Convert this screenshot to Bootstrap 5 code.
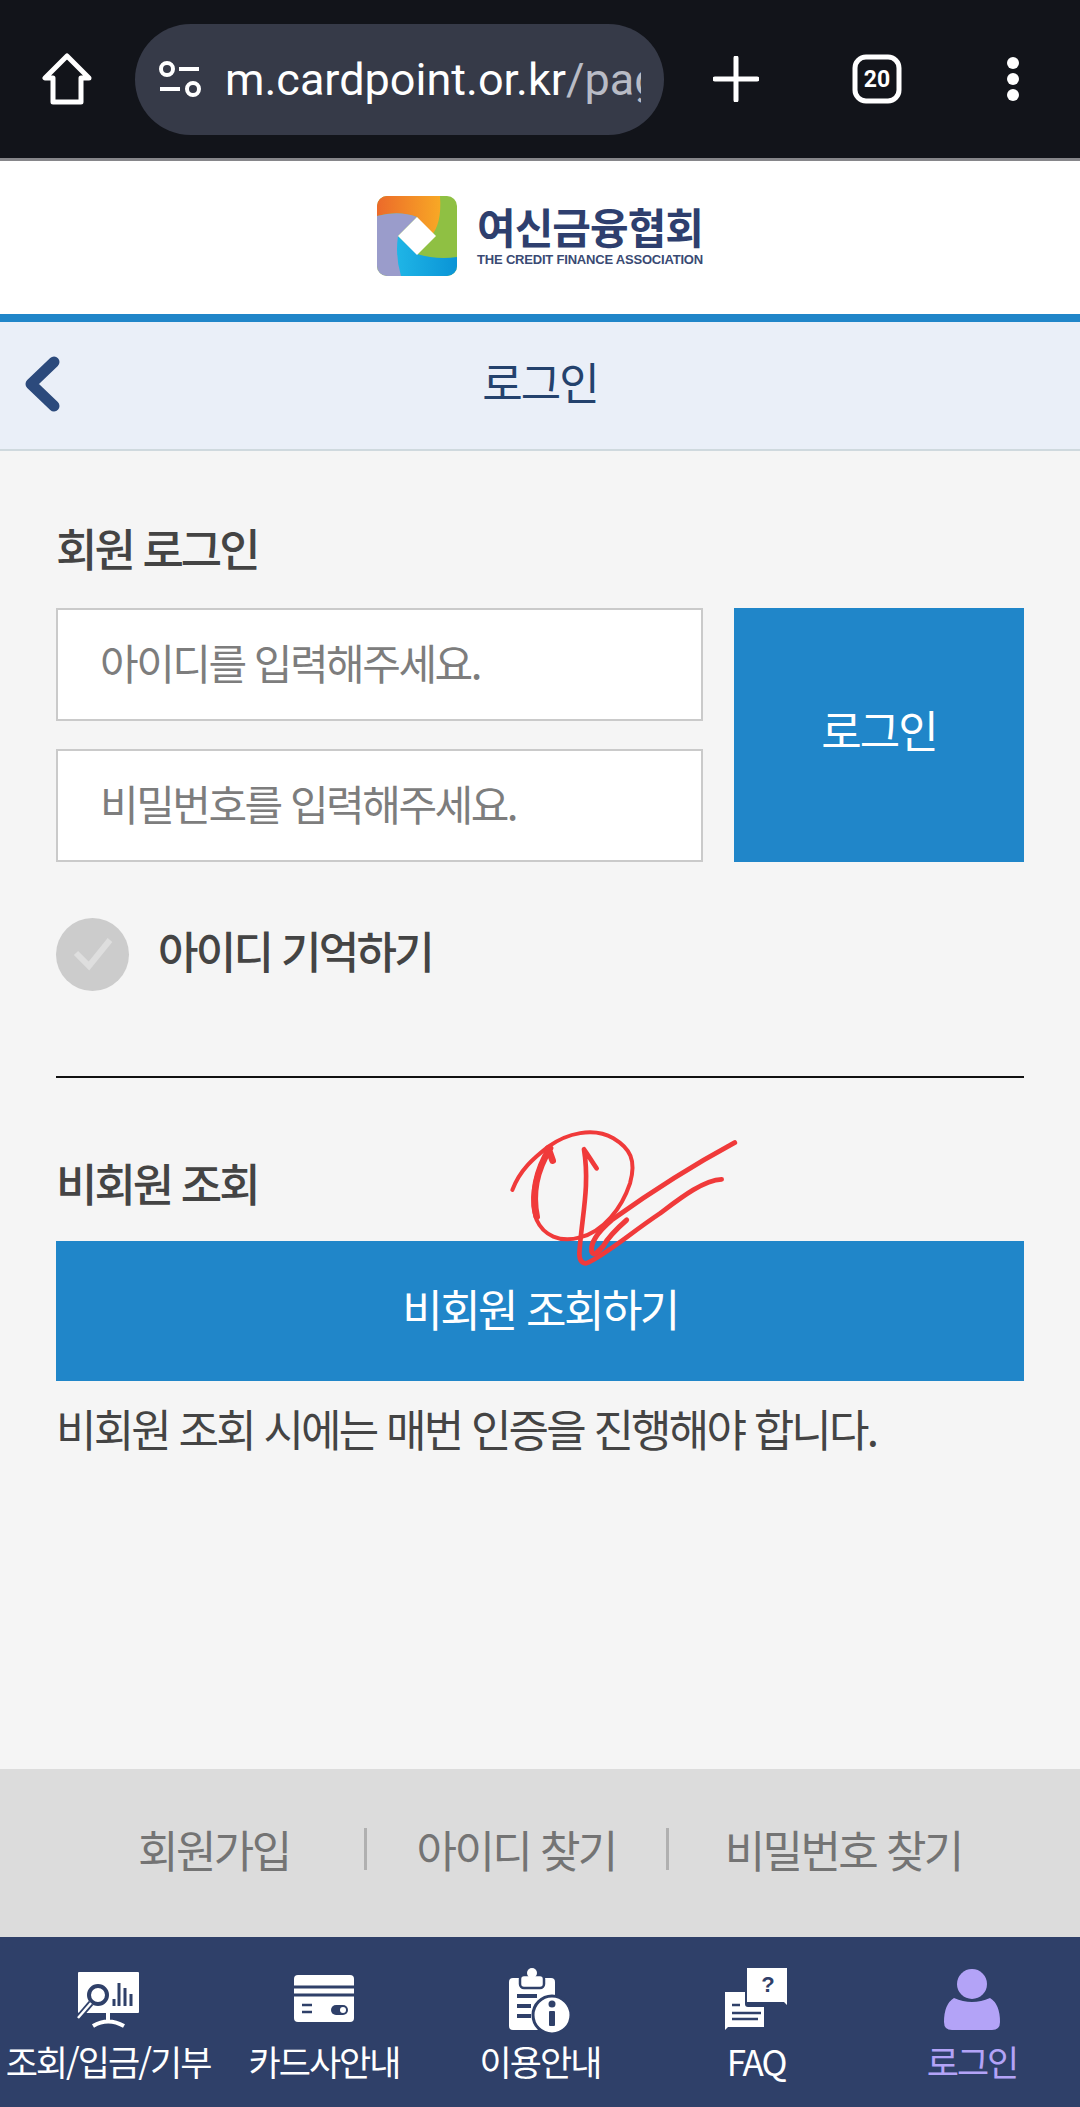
<!DOCTYPE html>
<html lang="ko">
<head>
    <meta charset="UTF-8">
    <meta name="viewport" content="width=device-width, initial-scale=1.0">
    <title>로그인</title>
    <link href="https://cdn.jsdelivr.net/npm/bootstrap@5.3.3/dist/css/bootstrap.min.css" rel="stylesheet">
    <style>
        html, body { height: 100%; }
        body {
            font-family: "Noto Sans CJK KR", "Noto Sans", sans-serif;
            background: #f5f5f5;
            color: #444;
            position: relative;
            letter-spacing: -2px;
        }
        .page-wrap { height: 2107px; }
        .chrome-bar { height: 161px; background: #12141a; border-bottom: 3px solid #86868a; padding: 0 0 0 42px; }
        .chrome-url {
            width: 529px; height: 111px; margin: 0 0 0 43px; background: #363a48; border-radius: 56px;
            padding-left: 24px; color: #fff; font-family: Roboto, sans-serif; font-size: 45px; letter-spacing: 0;
            overflow: hidden; white-space: nowrap;
        }
        .chrome-url-text { width: 416px; margin: 2px 0 0 24px; overflow: hidden; }
        .chrome-url-text span { color: #b9bcc6; }
        .chrome-plus { margin-left: 49px; }
        .chrome-tabs { margin-left: 93px; }
        .chrome-dots { margin-left: 104px; }
        .logo-bar { height: 153px; background: #fff; padding-bottom: 4px; }
        .logo-mark { filter: blur(.6px); }
        .logo-name { font-size: 42px; line-height: 46px; font-weight: 700; color: #2e3f6e; letter-spacing: -1px; }
        .logo-sub { font-family: "Liberation Sans", sans-serif; font-size: 13px; line-height: 16px; margin-top: 3px; font-weight: 700; color: #3a4a73; letter-spacing: -.2px; white-space: nowrap; }
        .title-bar { height: 137px; background: #eaeff8; border-top: 8px solid #2086c9; border-bottom: 2px solid #cfd9de; padding-bottom: 9px; position: relative; }
        .title-bar h1 { font-size: 44px; font-weight: 400; color: #24426d; margin: 0; letter-spacing: -2px; }
        .back-icon { position: absolute; left: 22px; top: 34px; }
        .main-area { padding: 0 56px; }
        .sec-title { font-size: 45px; font-weight: 500; line-height: 60px; margin: 0; color: #444; letter-spacing: -3px; }
        .login-title { margin-top: 67px; }
        .login-row { margin-top: 30px; gap: 31px; }
        .login-inputs { width: 647px; gap: 28px; }
        .login-input.form-control {
            height: 113px; border: 2px solid #cacaca; border-radius: 0; background: #fff;
            font-size: 42px; padding: 0 0 6px 42px; letter-spacing: -2.5px; color: #777;
        }
        .login-input.form-control::placeholder { color: #7d7d7d; opacity: 1; }
        .login-btn.btn {
            flex: 1; background: #2086c9; color: #fff; border: 0; border-radius: 0; padding-bottom: 18px; font-size: 44px; letter-spacing: -2px;
        }
        .remember { margin-top: 55px; gap: 29px; }
        .remember-check { width: 73px; height: 73px; border-radius: 50%; background: #cccccc; }
        .remember-label { font-size: 44px; font-weight: 500; letter-spacing: -2.7px; color: #444; padding-bottom: 8px; }
        .sec-rule { border: 0; border-top: 2px solid #111; opacity: 1; margin: 85px 0 0; }
        .guest-title { margin-top: 75px; }
        .guest-btn.btn {
            width: 100%; height: 140px; margin-top: 28px; background: #2086c9; color: #fff; border: 0; border-radius: 0;
            padding-bottom: 12px; font-size: 44px; letter-spacing: -2.5px;
        }
        .guest-note { font-size: 44px; line-height: 60px; margin: 17px 0 0; color: #444; letter-spacing: -2.8px; white-space: nowrap; }
        .sub-links { height: 168px; background: #dcdcdc; font-size: 44px; color: #747474; padding: 0 0 8px 138px; letter-spacing: -2.6px; }
        .sub-links a { color: inherit; text-decoration: none; white-space: nowrap; }
        .sub-sep { width: 3px; height: 42px; background: #b0b0b0; margin: 0 50px 0 74px; }
        .sub-sep-b { margin: 0 56px 0 50px; }
        .tab-bar { height: 170px; background: #2f4069; }
        .tab-item { color: #fff; text-decoration: none; font-size: 35px; line-height: 50px; letter-spacing: -2px; white-space: nowrap; padding-top: 31px; }
        .tab-item.is-on { color: #b3a3f7; }
        .tab-icon { height: 72px; margin-bottom: -4px; }
        .scribble { position: absolute; left: 480px; top: 1120px; pointer-events: none; }
    </style>
</head>
<body>
    <div class="page-wrap d-flex flex-column">
        <div class="chrome-bar d-flex align-items-center flex-shrink-0">
            <svg width="50" height="54" viewBox="0 0 50 54" fill="none" stroke="#fff" stroke-width="5" stroke-linejoin="round"><path d="M25 4 3 26h8v24h28V26h8z"/></svg>
            <div class="chrome-url d-flex align-items-center">
                <svg width="42" height="36" viewBox="0 0 42 36" fill="none" stroke="#fff" stroke-width="4" class="flex-shrink-0"><circle cx="8" cy="8" r="6"/><path d="M20 8h20M1 28h20"/><circle cx="34" cy="28" r="6"/></svg>
                <div class="chrome-url-text">m.cardpoint.or.kr<span>/page</span></div>
            </div>
            <svg class="chrome-plus" width="46" height="46" viewBox="0 0 46 46" stroke="#fff" stroke-width="5" stroke-linecap="round"><path d="M23 2v42M2 23h42"/></svg>
            <svg class="chrome-tabs" width="50" height="50" viewBox="0 0 50 50"><rect x="3" y="3" width="44" height="44" rx="11" fill="none" stroke="#fff" stroke-width="5"/><text x="25" y="33" text-anchor="middle" fill="#fff" font-family="Roboto, sans-serif" font-size="23" font-weight="700" letter-spacing="0">20</text></svg>
            <svg class="chrome-dots" width="14" height="46" viewBox="0 0 14 46" fill="#fff"><circle cx="7" cy="7" r="6"/><circle cx="7" cy="23" r="6"/><circle cx="7" cy="39" r="6"/></svg>
        </div>

        <div class="logo-bar d-flex align-items-center justify-content-center flex-shrink-0 gap-3">
            <svg class="logo-mark" width="80" height="80" viewBox="0 0 80 80">
                <defs>
                    <clipPath id="logoClip"><rect width="80" height="80" rx="10"/></clipPath>
                    <linearGradient id="logoOrange" x1="0" x2="1"><stop offset="0" stop-color="#ec6a2a"/><stop offset="1" stop-color="#f8a825"/></linearGradient>
                    <linearGradient id="logoBlue" x1="0" x2="1"><stop offset="0" stop-color="#1fb5e6"/><stop offset="1" stop-color="#0a94d6"/></linearGradient>
                </defs>
                <g clip-path="url(#logoClip)">
                    <rect width="80" height="80" fill="#8fc043"/>
                    <path d="M0 0h63q2 28-9 40L40 21Q20 14 0 20z" fill="url(#logoOrange)"/>
                    <path d="M0 20q22-6 40 1L21 40q4 26 19 40H0z" fill="#9a9ccb"/>
                    <path d="M21 40l19 18q20 6 40 3v19H24Q18 60 21 40z" fill="url(#logoBlue)"/>
                    <path d="M40 21 59 40 40 59 21 40z" fill="#fff"/>
                </g>
            </svg>
            <div class="ms-1">
                <div class="logo-name">여신금융협회</div>
                <div class="logo-sub">THE CREDIT FINANCE ASSOCIATION</div>
            </div>
        </div>

        <div class="title-bar d-flex align-items-center justify-content-center flex-shrink-0">
            <svg class="back-icon" width="40" height="56" viewBox="0 0 40 56" fill="none" stroke="#2c4a7c" stroke-width="11" stroke-linecap="round" stroke-linejoin="round"><path d="M32 6 9 28l23 22"/></svg>
            <h1>로그인</h1>
        </div>

        <div class="main-area flex-grow-1">
            <h2 class="sec-title login-title">회원 로그인</h2>
            <div class="login-row d-flex">
                <div class="login-inputs d-flex flex-column">
                    <input class="login-input form-control" type="text" placeholder="아이디를 입력해주세요.">
                    <input class="login-input form-control" type="text" placeholder="비밀번호를 입력해주세요.">
                </div>
                <button class="login-btn btn" type="button">로그인</button>
            </div>
            <div class="remember d-flex align-items-center">
                <div class="remember-check d-flex align-items-center justify-content-center">
                    <svg width="40" height="34" viewBox="0 0 40 34" fill="none" stroke="#dedede" stroke-width="6"><path d="M3 16l13 13L37 3"/></svg>
                </div>
                <span class="remember-label">아이디 기억하기</span>
            </div>
            <hr class="sec-rule">
            <h2 class="sec-title guest-title">비회원 조회</h2>
            <button class="guest-btn btn" type="button">비회원 조회하기</button>
            <p class="guest-note">비회원 조회 시에는 매번 인증을 진행해야 합니다.</p>
        </div>

        <div class="sub-links d-flex align-items-center flex-shrink-0">
            <a href="#">회원가입</a>
            <span class="sub-sep"></span>
            <a href="#">아이디 찾기</a>
            <span class="sub-sep sub-sep-b"></span>
            <a href="#">비밀번호 찾기</a>
        </div>

        <div class="tab-bar row g-0 flex-shrink-0">
            <a class="tab-item col d-flex flex-column align-items-center" href="#">
                <svg class="tab-icon" width="64" height="72" viewBox="0 0 64 72">
                    <rect x="2" y="4" width="61" height="41" rx="1" fill="#fff"/>
                    <circle cx="22" cy="27" r="9" fill="none" stroke="#2f4069" stroke-width="4"/>
                    <path d="M15 35 3 49" stroke="#2f4069" stroke-width="6"/><path d="M15 35 2 50" stroke="#fff" stroke-width="2.5"/>
                    <path d="M38 38v-7M43 38V15M49 38V20M55 38V26" stroke="#2f4069" stroke-width="3"/>
                    <path d="M32 45v9M17 58q15-9 31 0" stroke="#fff" stroke-width="4" fill="none"/>
                </svg>
                조회/입금/기부
            </a>
            <a class="tab-item col d-flex flex-column align-items-center" href="#">
                <svg class="tab-icon" width="60" height="72" viewBox="0 0 60 72">
                    <rect x="0" y="7" width="60" height="47" rx="4" fill="#fff"/>
                    <path d="M0 19h60M0 27h60" stroke="#2f4069" stroke-width="3"/>
                    <path d="M8 37h10M8 44h10" stroke="#2f4069" stroke-width="2.5"/>
                    <rect x="37" y="37" width="17" height="10" rx="5" fill="#2f4069"/><circle cx="49" cy="42" r="3" fill="#fff"/>
                </svg>
                카드사안내
            </a>
            <a class="tab-item col d-flex flex-column align-items-center" href="#">
                <svg class="tab-icon" width="62" height="72" viewBox="0 0 62 72">
                    <path d="M4 10h8v6h24v-6h6q4 0 4 4v44q0 4-4 4H4q-4 0-4-4V14q0-4 4-4z" fill="#fff"/>
                    <rect x="11" y="7" width="24" height="13" rx="4" fill="#fff" stroke="#2f4069" stroke-width="2.500"/><circle cx="23" cy="5" r="5" fill="#fff"/>
                    <path d="M8 28h20M8 38h14M8 48h14" stroke="#2f4069" stroke-width="4"/>
                    <circle cx="43" cy="47" r="19" fill="#fff" stroke="#2f4069" stroke-width="3"/>
                    <rect x="40" y="43" width="6" height="15" rx="1" fill="#2f4069"/><circle cx="43" cy="36" r="3.500" fill="#2f4069"/>
                </svg>
                이용안내
            </a>
            <a class="tab-item col d-flex flex-column align-items-center" href="#">
                <svg class="tab-icon" width="62" height="72" viewBox="0 0 62 72">
                    <path d="M22 0h40v37l-3-3H22z" fill="#fff"/>
                    <path d="M0 24h20v12q0 3 3 3h16v20H3l-3 3z" fill="#fff"/>
                    <path d="M7 37h8M7 45h29M7 51h26" stroke="#2f4069" stroke-width="2.500"/>
                    <text x="42" y="24" text-anchor="middle" font-family="Liberation Sans, sans-serif" font-size="22" font-weight="700" fill="#2f4069">?</text>
                </svg>
                FAQ
            </a>
            <a class="tab-item is-on col d-flex flex-column align-items-center" href="#">
                <svg class="tab-icon" width="56" height="72" viewBox="0 0 56 72" fill="#b3a3f7">
                    <circle cx="28" cy="16" r="15"/>
                    <path d="M10 30q18 8 36 0 10 6 10 24 0 8-8 8H8q-8 0-8-8 0-18 10-24z"/>
                </svg>
                로그인
            </a>
        </div>
    </div>

    <svg class="scribble" width="280" height="170" viewBox="0 0 840 510" fill="none" stroke="#f03a3a" stroke-linecap="round" stroke-linejoin="round">
        <path stroke-width="12" d="M97 210C120 150 160 115 205 80 260 40 340 20 400 55 450 85 470 120 450 190 425 265 370 335 300 352 240 370 190 345 170 300 150 250 155 170 210 85"/>
        <path stroke-width="20" d="M205 85 218 122M210 85C170 150 155 220 170 290"/>
        <path stroke-width="14" d="M312 88C328 110 335 125 350 145M312 88C330 200 305 290 298 400 298 420 305 430 318 430 370 410 450 340 540 280 600 235 670 180 725 178"/>
        <path stroke-width="15" d="M764 68C640 135 500 225 395 300 360 330 330 365 335 395 340 410 355 395 370 378 380 360 400 335 440 300"/>
    </svg>

    <script src="https://cdn.jsdelivr.net/npm/bootstrap@5.3.3/dist/js/bootstrap.bundle.min.js"></script>
</body>
</html>
